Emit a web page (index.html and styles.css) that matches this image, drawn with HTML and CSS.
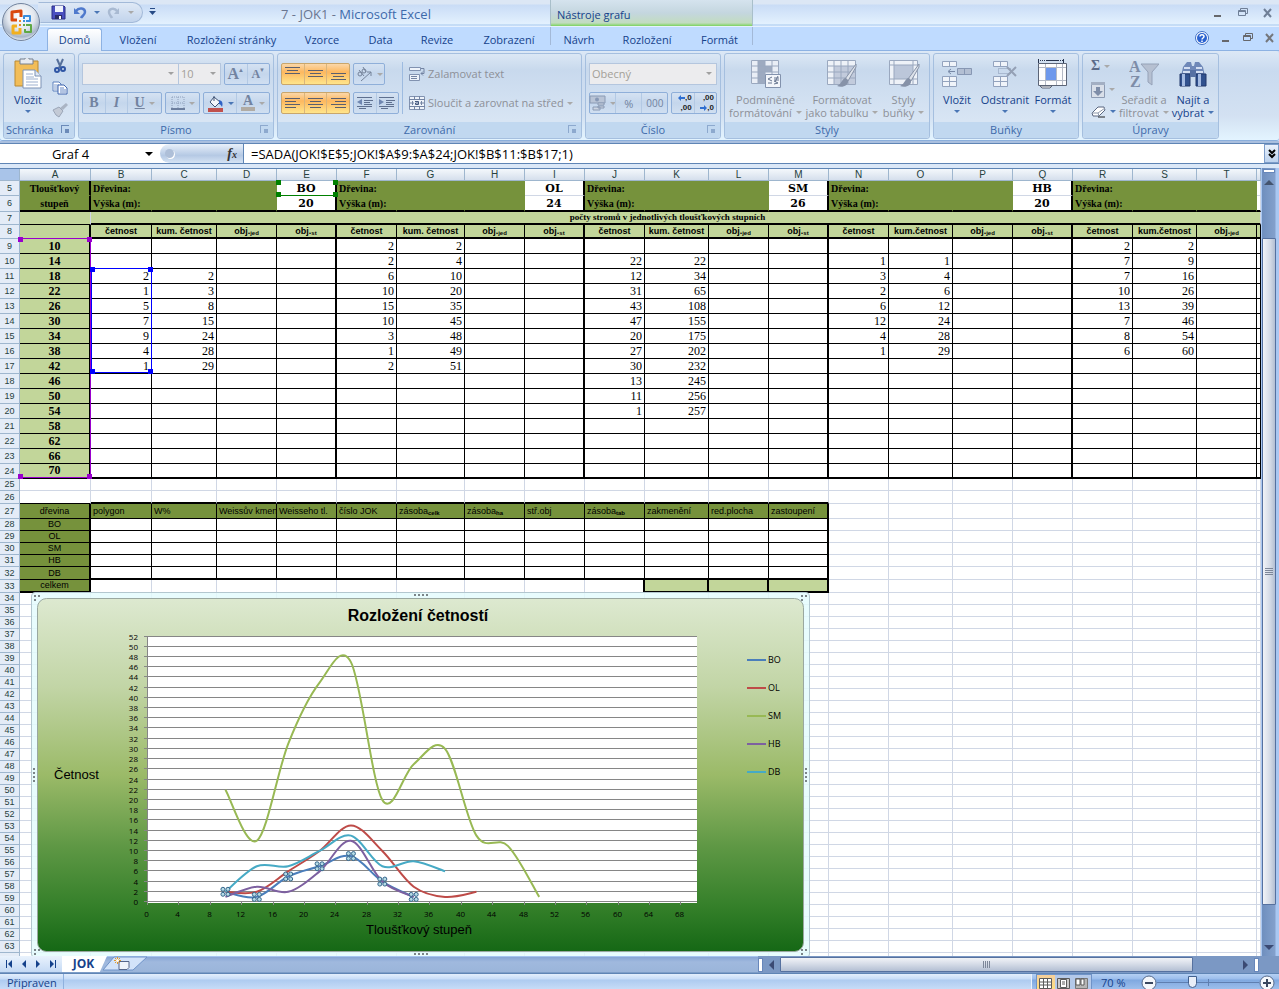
FILE: index.html
```html
<!DOCTYPE html>
<html lang="cs">
<head>
<meta charset="utf-8">
<title>7 - JOK1 - Microsoft Excel</title>
<link rel="stylesheet" href="styles.css">
</head>
<body>
<header class="titlebar">
  <button class="office" aria-label="Tlačítko Office">
    <svg width="42" height="42" viewBox="0 0 42 42">
      <defs>
        <radialGradient id="orb" cx=".5" cy=".35" r=".65"><stop offset="0" stop-color="#fff"/><stop offset=".55" stop-color="#e3e8ef"/><stop offset=".85" stop-color="#a9b6c8"/><stop offset="1" stop-color="#e9f0f8"/></radialGradient>
      </defs>
      <circle cx="21" cy="21" r="19.500" fill="#dfe8f3" opacity=".8"/>
      <circle cx="21" cy="21" r="18.500" fill="url(#orb)" stroke="#71839f"/>
      <g fill="none" stroke-linejoin="round">
        <path d="M17 19h-5v-8l9-1v6" stroke="#d9480f" stroke-width="3"/>
        <path d="M26 20h4v-5h-6v3" stroke="#3a8ede" stroke-width="2"/>
        <path d="M17 25h-4v7h7v-5" stroke="#f2b01e" stroke-width="3"/>
        <path d="M26 24h5v7h-6v-3" stroke="#5fa944" stroke-width="2"/>
      </g>
      <path d="M19 19h2v2h-2zM19 23h2v2h-2z" fill="#e8862a"/><path d="M23 19h2v2h-2z" fill="#3a8ede"/><path d="M23 23h2v2h-2z" fill="#5fa944"/>
    </svg>
  </button>
  <div class="qat">
    <button aria-label="Uložit"><svg width="15" height="15" viewBox="0 0 15 15"><path d="M1 1h12l1 1v12H1z" fill="#4a4fc0" stroke="#2b2f86"/><path d="M4 1h8v6H4z" fill="#eef2fb"/><path d="M4 10h7v4H4z" fill="#2a2c66"/><path d="M8 11h2v3H8z" fill="#fff"/></svg></button>
    <button aria-label="Zpět"><svg width="14" height="14" viewBox="0 0 14 14"><path d="M3 5c3-4 9-3 9 1 0 3-3 4-4 6" fill="none" stroke="#4f79cc" stroke-width="2.500"/><path d="M1 2v6h6z" fill="#4f79cc"/></svg></button>
    <i class="arr blue"></i>
    <button aria-label="Znovu" disabled><svg width="14" height="14" viewBox="0 0 14 14"><path d="M10 5c-3-4-8-2-8 1 0 3 2 4 3 6" fill="none" stroke="#a9bad2" stroke-width="2.500"/><path d="M12 2v6H7z" fill="#a9bad2"/></svg></button>
    <i class="arr"></i>
  </div>
  <button class="qat-more" aria-label="Přizpůsobit panel nástrojů Rychlý přístup"><svg width="7" height="8" viewBox="0 0 7 8"><path d="M1 0h5v1H1zM0 3h7L3.500 7z" fill="#274b86"/></svg></button>
  <h1><span>7 - JOK1 -</span> Microsoft Excel</h1>
  <div class="context">Nástroje grafu</div>
  <div class="winbtns">
    <button aria-label="Minimalizovat"><svg width="10" height="10" viewBox="0 0 10 10"><path d="M1 7h7v2H1z" fill="#66676b"/></svg></button>
    <button aria-label="Obnovit"><svg width="10" height="10" viewBox="0 0 10 10"><path d="M2.500 2.500v-2h7v5h-2M.5 2.500h7v5h-7zM0 3.500h8" fill="none" stroke="#6f7f97"/></svg></button>
    <button aria-label="Zavřít"><svg width="10" height="10" viewBox="0 0 10 10"><path d="M1 1l7 8M8 1L1 9" stroke="#6f7f97" stroke-width="2"/></svg></button>
  </div>
</header>

<nav class="tabs">
  <div class="tablist">
    <button class="tab on">Domů</button><button class="tab">Vložení</button><button class="tab">Rozložení stránky</button><button class="tab">Vzorce</button><button class="tab">Data</button><button class="tab">Revize</button><button class="tab">Zobrazení</button>
    <div class="ctx-tabs"><button class="tab">Návrh</button><button class="tab">Rozložení</button><button class="tab">Formát</button></div>
  </div>
  <div class="winbtns doc">
    <button aria-label="Nápověda"><svg width="14" height="14" viewBox="0 0 14 14"><circle cx="7" cy="7" r="6.500" fill="#fff" stroke="#3f6fc4"/><circle cx="7" cy="7" r="5" fill="#2a62d0"/><path d="M5 5.500C5 3 9 3 9 5.500 9 7 7 7 7 8.500M7 9.500v1.500" fill="none" stroke="#fff" stroke-width="1.500"/></svg></button>
    <button aria-label="Minimalizovat okno"><svg width="10" height="10" viewBox="0 0 10 10"><path d="M1 7h7v2H1z" fill="#66676b"/></svg></button>
    <button aria-label="Obnovit okno"><svg width="10" height="10" viewBox="0 0 10 10"><path d="M2.500 2.500v-2h7v5h-2M.5 2.500h7v5h-7zM0 3.500h8" fill="none" stroke="#66676b"/></svg></button>
    <button aria-label="Zavřít okno"><svg width="10" height="10" viewBox="0 0 10 10"><path d="M1 1l7 8M8 1L1 9" stroke="#75777c" stroke-width="2"/></svg></button>
  </div>
</nav>

<section class="ribbon">
  <section class="group">
    <div class="body clip">
      <button class="big"><svg width="30" height="32" viewBox="0 0 30 32"><path d="M2 3h23v25H2z" fill="#f2bd58" stroke="#b98a35"/><path d="M7 1h5c0-2 4-2 4 0h4v5H7z" fill="#e7eaf0" stroke="#77808f"/><path d="M10 12h12l6 6v12H10z" fill="#fff" stroke="#7d92b5"/><path d="M22 12v6h6" fill="#dfe7f3" stroke="#7d92b5"/><path d="M13 16h7M13 19h8M13 21h12M13 24h12M13 27h12" stroke="#9db0cf"/></svg><span>Vložit</span><i class="arr blue"></i></button>
      <div class="stack">
        <button aria-label="Vyjmout"><svg width="16" height="16" viewBox="0 0 16 16"><path d="M5 1l4 9M11 1L7 10" stroke="#56709b" stroke-width="2"/><circle cx="5" cy="12" r="2" fill="none" stroke="#2f55a4" stroke-width="2"/><circle cx="11" cy="11" r="2" fill="none" stroke="#2f55a4" stroke-width="2"/></svg></button>
        <button aria-label="Kopírovat"><svg width="16" height="16" viewBox="0 0 16 16"><path d="M1 2h6l2 2v7H1z" fill="#fff" stroke="#5d80bd"/><path d="M2 5h5M2 7h5M2 9h5" stroke="#7f9ccd"/><path d="M6 5h6l3 3v6H6z" fill="#fff" stroke="#3c63ad"/><path d="M8 8h4M8 10h6M8 12h6" stroke="#6487c5"/></svg></button>
        <button aria-label="Kopírovat formát"><svg width="16" height="16" viewBox="0 0 16 16"><path d="M14 1l2 2-5 5-3-2z" fill="#aab4c4"/><path d="M1 8l6-3 4 4-4 6-3-2z" fill="#c3cad6" stroke="#9aa5b7"/></svg></button>
      </div>
    </div>
    <h2>Schránka<i class="dlg"></i></h2>
  </section>

  <section class="group">
    <div class="body rows">
      <div class="row">
        <span class="joined"><span class="combo font"><select aria-label="Písmo" disabled><option></option></select></span><span class="combo size"><select aria-label="Velikost písma" disabled><option>10</option></select></span></span>
        <span class="set two"><button disabled class="serif a1">A<sup>▲</sup></button><button disabled class="serif a2">A<sup>▼</sup></button></span>
      </div>
      <div class="row">
        <span class="set biu"><button disabled class="serif">B</button><button disabled class="serif it">I</button><button disabled class="serif un">U<i class="arr"></i></button></span>
        <span class="set brd"><button disabled aria-label="Ohraničení"><svg width="14" height="14" viewBox="0 0 14 14"><path d="M1 1h12v12M1 1v12M7 1v12M1 7h12" fill="none" stroke="#8fa0bb" stroke-dasharray="1 1"/><path d="M0 13h14" stroke="#6c7f9f" stroke-width="2"/></svg><i class="arr"></i></button></span>
        <span class="set fill"><button aria-label="Barva výplně"><svg width="17" height="17" viewBox="0 0 17 17"><path d="M7 2l6 5-5 5-5-5z" fill="#f3f6fb" stroke="#3f5275"/><path d="M7 6V1" stroke="#3f5275"/><path d="M12 5c4 1 4 4 3 7-1-2-2-3-3-3z" fill="#2f62c5"/><path d="M1 13h15v4H1z" fill="#c0504d"/></svg><i class="arr blue"></i></button><button disabled aria-label="Barva písma" class="serif fc"><b>A</b><i class="arr"></i></button></span>
      </div>
    </div>
    <h2>Písmo<i class="dlg off"></i></h2>
  </section>

  <section class="group">
    <div class="body align">
      <div class="rows">
        <div class="row"><span class="set orange"><button aria-label="Zarovnat nahoru"><i class="ln t"></i></button><button aria-label="Zarovnat na střed svisle"><i class="ln m"></i></button><button aria-label="Zarovnat dolů"><i class="ln b"></i></button></span>
          <span class="set ori"><button disabled aria-label="Orientace"><svg width="17" height="16" viewBox="0 0 17 16"><g fill="none" stroke="#75839a"><ellipse cx="4" cy="8" rx="2" ry="2"/><path d="M3 4l5 6"/><ellipse cx="8" cy="5" rx="2" ry="2"/><path d="M7 1l3 5M5 15L15 6M11 6h4v4"/></g></svg><i class="arr"></i></button></span></div>
        <div class="row"><span class="set orange"><button aria-label="Zarovnat vlevo"><i class="ln l"></i></button><button aria-label="Zarovnat na střed"><i class="ln c"></i></button><button aria-label="Zarovnat vpravo"><i class="ln r"></i></button></span>
          <span class="set two"><button disabled aria-label="Zmenšit odsazení"><svg width="16" height="14" viewBox="0 0 16 14"><path d="M0 1.500h15M7 4.500h9M7 6.500h6M7 8.500h8M0 10.500h15M2 12.500h7" stroke="#5f708f"/><path d="M5 3v6L0 6z" fill="#6f86b0"/></svg></button><button disabled aria-label="Zvětšit odsazení"><svg width="16" height="14" viewBox="0 0 16 14"><path d="M0 1.500h15M7 4.500h9M7 6.500h6M7 8.500h8M0 10.500h15M2 12.500h7" stroke="#5f708f"/><path d="M0 3v6l5-3z" fill="#6f86b0"/></svg></button></span></div>
      </div>
      <div class="rows wide">
        <button disabled class="line"><svg width="16" height="16" viewBox="0 0 16 16"><path d="M.5 1.500h11v3H.5zM.5 8.500h10v6H.5z" fill="#eef3fa" stroke="#8192b0"/><path d="M2 10.500h6M2 12.500h6M12 2.500h3v5h-3M14 5.500l-2 2 2 2" fill="none" stroke="#7384a3"/></svg>Zalamovat text</button>
        <button disabled class="line"><svg width="16" height="16" viewBox="0 0 16 16"><path d="M.5 1.500h15v13H.5z" fill="#eef3fa" stroke="#8192b0"/><path d="M0 4.500h16M0 11.500h16M5.500 1v3M10.500 1v3M5.500 12v3M10.500 12v3M1 8h4M11 8h4M3.500 6v4M12.500 6v4" stroke="#7384a3"/><path d="M6 6.500h3.500v3h-3V8h3" fill="none" stroke="#44587f"/></svg>Sloučit a zarovnat na střed<i class="arr"></i></button>
      </div>
    </div>
    <h2>Zarovnání<i class="dlg off"></i></h2>
  </section>

  <section class="group">
    <div class="body rows">
      <div class="row"><span class="combo full"><select aria-label="Formát čísla" disabled><option>Obecný</option></select></span></div>
      <div class="row"><span class="set num"><button disabled aria-label="Účetnický formát"><svg width="17" height="16" viewBox="0 0 17 16"><path d="M1 1h15v7H1z" fill="#b9c4d6" stroke="#8a9ab4"/><circle cx="8" cy="4.500" r="2" fill="#8798b5"/><path d="M9 8h6v2H9zM9 11h6v2H9zM4 12h7v3H4z" fill="#cdd5e2" stroke="#8a9ab4"/></svg><i class="arr"></i></button><button disabled>%</button><button disabled class="k">000</button></span>
        <span class="set two dec"><button aria-label="Přidat desetinné místo"><span><svg width="7" height="6" viewBox="0 0 7 6"><path d="M0 3l3-3v2h4v2H3v2z" fill="#2f6fd0"/></svg>,0</span><span>,00</span></button><button aria-label="Odebrat desetinné místo"><span>,00</span><span><svg width="7" height="6" viewBox="0 0 7 6"><path d="M7 3L4 0v2H0v2h4v2z" fill="#2f6fd0"/></svg>,0</span></button></span></div>
    </div>
    <h2>Číslo<i class="dlg off"></i></h2>
  </section>

  <section class="group">
    <div class="body bigs styles">
      <button class="big" disabled><svg width="30" height="30" viewBox="0 0 30 30"><path d="M0 1h28v24H0z" fill="#e9eef6"/><path d="M7 1h7v24H7zM14 7h7v6h-7z" fill="#9daac0"/><path d="M.5 1.500h27v23H.5zM0 7h28M0 13h28M0 19h28M7 1v24M14 1v24M21 1v24" fill="none" stroke="#9aa8bf"/><path d="M14.500 15.500h15v13h-15z" fill="#f2f5fa" stroke="#8292ad"/><path d="M21 18l-4 2 4 2M17 24h4M23 19h5M23 21h5M27 17l-3 6M23 25l4-1-4-2" fill="none" stroke="#66758f"/></svg><span>Podmíněné<br>formátování<i class="arr"></i></span></button>
      <button class="big" disabled><svg width="32" height="30" viewBox="0 0 32 30"><path d="M1.500 1.500h28v24h-28z" fill="#eef2f8"/><path d="M8 7h22v18H8z" fill="#c2cbdc"/><path d="M1.500 1.500h28v24h-28zM1 7h28M1 13h28M1 19h28M8 1v24M15 1v24M22 1v24" fill="none" stroke="#9aa8bf"/><path d="M30 5L19 20l3 2 8-14z" fill="#dde2ea" stroke="#8793a8"/><path d="M20 19c-4 0-4 6-9 8 5 2 12 0 11-6z" fill="#8692a8"/></svg><span>Formátovat<br>jako tabulku<i class="arr"></i></span></button>
      <button class="big" disabled><svg width="32" height="30" viewBox="0 0 32 30"><path d="M1.500 1.500h28v24h-28z" fill="#eef2f8"/><path d="M6 6h19v14H6z" fill="#bcc7da"/><path d="M1.500 1.500h28v24h-28zM1 6h28M1 20h28M6 1v24M25 1v24" fill="none" stroke="#9aa8bf"/><path d="M31 5L20 20l3 2 8-14z" fill="#dde2ea" stroke="#8793a8"/><path d="M21 19c-4 0-4 6-9 8 5 2 12 0 11-6z" fill="#8692a8"/></svg><span>Styly<br>buňky<i class="arr"></i></span></button>
    </div>
    <h2>Styly</h2>
  </section>

  <section class="group">
    <div class="body bigs cells">
      <button class="big"><svg width="32" height="30" viewBox="0 0 32 30"><path d="M1.500 2.500h14v5h-14zM1.500 17.500h14v10h-14zM8.500 2v6M8.500 17v11M1 22.500h15" fill="#f0f4fa" stroke="#93a3be"/><path d="M16.500 9.500h14v6h-14zM23.500 9v7" fill="#b3bfd3" stroke="#8797b3"/><path d="M14 12.500H8M10 10l-3 2.500 3 2.500" fill="none" stroke="#7788a6"/></svg><span>Vložit</span><i class="arr blue"></i></button>
      <button class="big"><svg width="32" height="30" viewBox="0 0 32 30"><path d="M4.500 2.500h14v5h-14zM4.500 17.500h14v10h-14zM11.500 2v6M11.500 17v11M4 22.500h15" fill="#f0f4fa" stroke="#93a3be"/><path d="M9.500 9.500h12v5h-12z" fill="none" stroke="#8797b3" stroke-dasharray="1 1"/><path d="M18 8l9 9M27 8l-9 9" stroke="#94a0b5" stroke-width="2"/></svg><span>Odstranit</span><i class="arr blue"></i></button>
      <button class="big"><svg width="32" height="30" viewBox="0 0 32 30"><path d="M1.500 0v4M26.500 0v4M9 1.500h12" stroke="#27344e" fill="none"/><path d="M3 1.500h23" stroke="#27344e" stroke-dasharray="1 1"/><path d="M1.500 4.500h28v22h-28z" fill="#fdfdfe" stroke="#5c6577"/><path d="M9 9h10v12H9z" fill="#6d98ec"/><path d="M2 8.500h27M2 21.500h27M8.500 5v21M19.500 5v21M25.500 5v21" stroke="#b3b9c5"/><path d="M3 27h12l-2 2H5z" fill="#fff" stroke="#5c6577"/></svg><span>Formát</span><i class="arr blue"></i></button>
    </div>
    <h2>Buňky</h2>
  </section>

  <section class="group">
    <div class="body bigs edit">
      <div class="stack">
        <button disabled class="sigma">Σ<i class="arr"></i></button>
        <button disabled aria-label="Vyplnit"><svg width="14" height="16" viewBox="0 0 14 16"><path d="M.5.500h13v15H.5z" fill="#d9dfe9" stroke="#8d9bb3"/><path d="M0 0h14v3H0z" fill="#a3afc3"/><path d="M5 5h4v4h3l-5 5-5-5h3z" fill="#7e8da8"/></svg><i class="arr"></i></button>
        <button aria-label="Vymazat"><svg width="15" height="13" viewBox="0 0 15 13"><path d="M7 2h6l1 3-6 6H2l-1-3z" fill="#fff" stroke="#5a6780"/><path d="M1 8h6l7-5M8 11L7 8" fill="none" stroke="#8d98ab"/><path d="M7 12h7" stroke="#222"/></svg><i class="arr blue"></i></button>
      </div>
      <button class="big" disabled><svg width="30" height="30" viewBox="0 0 30 30"><path d="M12 5h18l-7 8v13l-4-3V13z" fill="#b6c0d1" stroke="#95a2b8"/><text x="0" y="13" class="az">A</text><text x="1" y="28" class="az">Z</text></svg><span>Seřadit a<br>filtrovat<i class="arr"></i></span></button>
      <button class="big"><svg width="30" height="30" viewBox="0 0 30 30"><path d="M5 8l4-5h4l1 4h2l1-4h4l4 5 2 9H3z" fill="#6f88b8"/><path d="M6 9h6M18 9h6M5 13h8M17 13h8" stroke="#d3def2" stroke-width="2"/><path d="M2 15h10v12H2zM18 15h10v12H18z" fill="#31518e" stroke="#22396a"/><path d="M4 15h3v12H4zM20 15h3v12h-3z" fill="#a5bbe2"/><path d="M12 11h6v7h-6z" fill="#5670a3"/></svg><span>Najít a<br>vybrat<i class="arr blue"></i></span></button>
    </div>
    <h2>Úpravy</h2>
  </section>
</section>

<section class="formula-row">
  <div class="namebox"><input aria-label="Pole názvů" value="Graf 4"><i class="arr black"></i></div>
  <div class="fxbox"><i class="knob"></i><button class="fx">f<small>x</small></button></div>
  <input class="formula" aria-label="Řádek vzorců" value="=SADA(JOK!$E$5;JOK!$A$9:$A$24;JOK!$B$11:$B$17;1)">
  <button class="expand" aria-label="Rozbalit řádek vzorců"><svg width="9" height="10" viewBox="0 0 9 10"><path d="M1 1l3 3 3-3M1 5l3 3 3-3" fill="none" stroke="#000" stroke-width="2"/></svg></button>
</section>

<main class="work">
  <div class="sheet">
    <table class="grid" id="grid"></table>
    <div class="range green"><i></i><i></i><i></i><i></i></div>
    <div class="range purple"><i></i><i></i><i></i><i></i></div>
    <div class="range blue"><i></i><i></i><i></i><i></i></div>
    <figure class="chart">
      <svg id="chart" width="767" height="354" viewBox="0 0 767 354" role="img" aria-label="Rozložení četností">
        <defs><linearGradient id="bg" x1="0" y1="0" x2="0" y2="1"><stop offset="0" stop-color="#dde9d0"/><stop offset=".25" stop-color="#c2d5a6"/><stop offset=".5" stop-color="#9bba68"/><stop offset=".7" stop-color="#5f9845"/><stop offset=".87" stop-color="#35802a"/><stop offset="1" stop-color="#156815"/></linearGradient></defs>
        <rect x=".5" y=".5" width="766" height="353" rx="9" fill="url(#bg)" stroke="#9aa8a0"/>
        <text x="381" y="23" class="c-title">Rozložení četností</text>
        <text x="17" y="181" class="c-axis">Četnost</text>
        <text x="329" y="336" class="c-axis">Tloušťkový stupeň</text>
      </svg>
      <i class="grip n"></i><i class="grip s"></i><i class="grip w"></i><i class="grip e"></i>
      <i class="grip nw"></i><i class="grip ne"></i><i class="grip sw"></i><i class="grip se"></i>
    </figure>
  </div>
  <div class="vscroll">
    <i class="split"></i>
    <button aria-label="Nahoru"><i class="tri up"></i></button>
    <div class="vtrack"><i class="vthumb"></i></div>
    <button aria-label="Dolů"><i class="tri down"></i></button>
  </div>
</main>

<section class="sheetbar">
  <div class="sheetnav">
    <button aria-label="První list"><svg width="8" height="8" viewBox="0 0 8 8"><path d="M1 0h1v8H1zM7 0v8L3 4z" fill="#15428b"/></svg></button>
    <button aria-label="Předchozí list"><svg width="8" height="8" viewBox="0 0 8 8"><path d="M6 0v8L2 4z" fill="#15428b"/></svg></button>
    <button aria-label="Další list"><svg width="8" height="8" viewBox="0 0 8 8"><path d="M2 0v8l4-4z" fill="#15428b"/></svg></button>
    <button aria-label="Poslední list"><svg width="8" height="8" viewBox="0 0 8 8"><path d="M6 0h1v8H6zM1 0v8l4-4z" fill="#15428b"/></svg></button>
  </div>
  <button class="sheettab">JOK</button>
  <button class="newtab" aria-label="Vložit list"><svg width="46" height="16" viewBox="0 0 46 16"><path d="M1 14L12 1h33L31 14z" fill="#d3e3f9" stroke="#6f93c8"/><path d="M17 5.500h10v6l-2 2h-8z" fill="#eef3fb" stroke="#54658a"/><path d="M15.500 1v7M12 4.500h7M13 2l5 5M18 2l-5 5" stroke="#e29a2c"/><circle cx="15.500" cy="4.500" r="1.500" fill="#fff"/></svg></button>
  <div class="hscroll">
    <i class="hsplit"></i>
    <button aria-label="Vlevo"><i class="tri left"></i></button>
    <div class="htrack"><div class="hthumb"><i></i></div></div>
    <button aria-label="Vpravo"><i class="tri right"></i></button>
    <i class="hsplit"></i>
  </div>
</section>

<footer class="status">
  <span class="ready">Připraven</span>
  <div class="tools">
    <div class="views">
      <button class="on" aria-label="Normálně"><svg width="13" height="11" viewBox="0 0 13 11"><path d="M.5.500h12v10H.5zM.5 4h12M.5 7h12M4.500.500v10M8.500.500v10" fill="#fff" stroke="#5b5b5b"/></svg></button>
      <button aria-label="Rozložení stránky"><svg width="13" height="11" viewBox="0 0 13 11"><path d="M.5.500h12v10H.5z" fill="#c9c9c9" stroke="#5b5b5b"/><path d="M3.500 1.500h6v8h-6zM5 4h3M5 6h3" fill="#fff" stroke="#5b5b5b"/></svg></button>
      <button aria-label="Konce stránek"><svg width="13" height="11" viewBox="0 0 13 11"><path d="M.5.500h12v10H.5z" fill="#b5b5b5" stroke="#777"/><path d="M1 1h4v6H1zM6 1h3v6H6z" fill="#fff" stroke="#5b5b5b"/></svg></button>
    </div>
    <span class="pct">70 %</span>
    <button class="zoom" aria-label="Oddálit"><svg width="16" height="16" viewBox="0 0 16 16"><circle cx="8" cy="8" r="7" fill="#f4f7fb" stroke="#566a8c"/><path d="M4 8h8" stroke="#39465e" stroke-width="2"/></svg></button>
    <input type="range" min="10" max="174" value="65" aria-label="Lupa">
    <button class="zoom" aria-label="Přiblížit"><svg width="16" height="16" viewBox="0 0 16 16"><circle cx="8" cy="8" r="7" fill="#f4f7fb" stroke="#566a8c"/><path d="M4 8h8M8 4v8" stroke="#39465e" stroke-width="2"/></svg></button>
  </div>
</footer>
<script src="script.js"></script>
</body>
</html>
```
FILE: styles.css
```css
* { box-sizing: border-box; }
body {
  margin: 0; height: 100vh; overflow: hidden;
  display: flex; flex-direction: column;
  font-family: "Open Sans", "Noto Sans", sans-serif; font-size: 11px; color: #15428b;
  background: #bfdbff;
}
button, select, input { font: inherit; color: inherit; margin: 0; padding: 0; border: 0; background: none; }
h1, h2, figure { margin: 0; font-weight: normal; font-size: inherit; }
svg { display: block; flex: none; }

.arr { width: 0; height: 0; border: 3px solid transparent; border-top-color: #a9a9a9; border-bottom: 0; flex: none; display: inline-block; }
.arr.blue { border-top-color: #4a76b5; }
.arr.black { border-width: 4px 4px 0; border-top-color: #000; }

/* title bar */
.titlebar {
  height: 27px; flex: none; display: flex; position: relative;
  background: linear-gradient(#dce7f5 0, #dce7f5 4px, #c9dcf6 5px, #e3f1fe 24px, #a6c8ee 25px, #e5f1ff 26px);
}
.office { position: absolute; left: 0; top: 1px; z-index: 2; }
.qat {
  margin: 2px 0 3px 38px; width: 105px; height: 21px; padding: 0 8px 0 12px;
  display: flex; align-items: center; justify-content: space-between;
  border: 1px solid #a2b9d8; border-left-color: transparent; border-radius: 0 11px 11px 0;
  background: linear-gradient(#dfe9f6, #c2d4ec);
}
.qat-more { width: 19px; padding-left: 6px; height: 24px; }
.titlebar h1 { width: 388px; text-align: center; font-size: 13px; line-height: 29px; color: #3e6aaa; }
.titlebar h1 span { color: #6a7690; }
.context {
  width: 203px; height: 26px; padding-left: 6px; line-height: 30px;
  border: solid #a9bfca; border-width: 0 1px;
  background: linear-gradient(#d5e3ee 0, #c4d6df 50%, #c2dcc0 88%, #7cd35e 100%);
}
.winbtns { margin-left: auto; display: flex; gap: 15px; padding: 8px 6px 0 0; align-items: flex-start; height: 20px; }
.winbtns.doc { gap: 12px; padding: 5px 4px 0 0; align-items: center; height: 17px; }

/* ribbon tabs */
.tabs { height: 24px; flex: none; display: flex; background: #bfdbff; border-bottom: 1px solid #8db2e3; }
.tablist { margin-left: 47px; display: grid; grid-template-columns: 55px 72px 115px 66px 51px 62px 82px 203px; height: 24px; }
.tab { line-height: 26px; text-align: center; white-space: nowrap; height: 24px; }
.tab.on { margin-top: 1px; height: 23px; line-height: 22px; background: linear-gradient(#fff, #dce7f5); border: 1px solid #8db2e3; border-bottom: 0; border-radius: 3px 3px 0 0; }
.ctx-tabs { display: grid; grid-template-columns: 56px 80px 1fr; border: solid #a3b9d8; border-width: 0 1px; height: 18px; }

/* ribbon */
.ribbon {
  height: 90px; flex: none; padding: 2px 3px 3px; display: grid; gap: 3px;
  grid-template-columns: 72px 196px 305px 136px 206px 146px 137px;
  background: linear-gradient(#dce8f6, #c9daef 20px, #d3e1f2 65px, #e3f4ff);
  border-bottom: 1px solid #8aaedb; border-radius: 0 3px 3px 3px;
}
.group { border: 1px solid #a5bfdf; border-radius: 3px; display: flex; flex-direction: column; background: linear-gradient(#dbe7f5, #c8d9ed 16px, #d8e5f4 66px); min-width: 0; }
.group h2 { height: 16px; line-height: 15px; text-align: center; background: #c1d8f0; color: #3e6aaa; display: flex; justify-content: center; border-radius: 0 0 3px 3px; position: relative; }
.dlg { position: absolute; right: 5px; top: 3px; width: 8px; height: 8px; border: solid #6b8ab8; border-width: 1px 0 0 1px; }
.dlg::after { content: ""; position: absolute; right: 0; bottom: 0; width: 4px; height: 4px; background: #6b8ab8; }
.dlg.off { opacity: .6; }
.group:first-child h2 { justify-content: flex-start; padding-left: 2px; }
.body { flex: 1; min-height: 0; }
.big { display: flex; flex-direction: column; align-items: center; line-height: 13px; white-space: nowrap; }
.big svg { height: 32px; margin-bottom: 3px; }
.big:disabled, .line:disabled { color: #8d9098; }
.big > .arr { margin-top: 4px; }
.big span .arr { margin: 0 0 3px 4px; }
.clip { display: grid; grid-template-columns: 48px 1fr; padding-top: 4px; }
.stack { display: flex; flex-direction: column; justify-content: space-between; align-items: flex-start; height: 60px; }
.stack button { display: flex; align-items: center; gap: 4px; }
.rows { display: flex; flex-direction: column; gap: 7px; padding: 9px 3px 0; }
.row { display: flex; gap: 3px; height: 22px; }
.joined { display: flex; }
.combo { position: relative; display: block; height: 22px; border: 1px solid #b4c6de; background: #ececee; color: #a39f98; }
.combo select { appearance: none; width: 100%; height: 19px; padding-left: 2px; color: inherit; opacity: 1; }
.combo::after { content: ""; position: absolute; right: 4px; top: 8px; border: 3px solid transparent; border-top-color: #a0a0a0; border-bottom: 0; }
.font { width: 97px; } .size { width: 43px; margin-left: -1px; } .full { width: 128px; }
.set { display: flex; border: 1px solid #8fafd9; border-radius: 2px; height: 22px; background: linear-gradient(#d5e2f2, #c4d6ec 50%, #d0dff1); }
.set button { flex: 1; display: flex; align-items: center; justify-content: center; gap: 4px; border-left: 1px solid #b3c9e4; min-width: 0; }
.set button:first-child { border-left: 0; }
.set button:disabled { color: #7283a0; }
.two { width: 46px; } .biu { width: 80px; } .brd { width: 35px; } .fill { width: 67px; } .ori { width: 32px; } .num { width: 80px; }
.biu .un { flex: 1 0 12px; }
.serif { font-family: "Liberation Serif", serif; font-weight: bold; font-size: 14px; }
.serif sup { font-size: 6px; line-height: 6px; align-self: flex-start; margin: 3px 0 0 -5px; }
.a1 { font-size: 16px; } .it { font-style: italic; } .un { text-decoration: underline; } .a2 { font-size: 12px; }
.fc b { border-bottom: 4px solid #b0aba4; line-height: 12px; padding: 0 2px; }
.k { font-size: 10px; }
.set.dec button { flex-direction: column; align-items: flex-end; gap: 0; padding-right: 2px; font: bold 8px/10px "Liberation Sans", Arial, sans-serif; color: #222; }
.dec span { display: flex; align-items: center; height: 10px; }
.orange { width: 69px; border-color: #c9a66b; background: linear-gradient(#fbd7a8, #fdb85f 40%, #ffe58b); }
.orange button { border-color: #d9b57c; }
.ln { width: 15px; height: 10px; display: block; --c: #5b5f6e; background:
  linear-gradient(var(--c), var(--c)) 0 0/15px 1px no-repeat, linear-gradient(var(--c), var(--c)) 50% 3px/11px 1px no-repeat,
  linear-gradient(var(--c), var(--c)) 0 6px/15px 1px no-repeat, linear-gradient(var(--c), var(--c)) 50% 9px/11px 1px no-repeat; }
.ln.t { margin-bottom: 6px; height: 8px; } .ln.m { height: 8px; } .ln.b { margin-top: 6px; height: 8px; }
.ln.l { background-position: 0 0, 0 3px, 0 6px, 0 9px; } .ln.r { background-position: 0 0, 100% 3px, 0 6px, 100% 9px; }
.align { display: flex; }
.align .wide { margin: 8px 0 8px 0; padding: 1px 0 0 6px; border-left: 1px solid #9dbbe0; }
.align .rows { flex: none; }
.line { height: 22px; display: flex; align-items: center; gap: 3px; white-space: nowrap; line-height: 20px; }
.bigs { display: grid; padding-top: 4px; align-items: start; }
.styles { grid-template-columns: 77px 76px 47px; padding-left: 2px; }
.cells { grid-template-columns: 46px 50px 46px; }
.edit { grid-template-columns: 34px 48px 50px; padding-left: 3px; }
.edit .stack { padding-left: 5px; }
.sigma { font: bold 14px/16px "Liberation Serif", serif; color: #5b6b88; }
.az { font: bold 16px "Liberation Serif", serif; fill: #7e8da8; }

/* formula bar */
.formula-row { flex: none; height: 27px; padding: 3px 0 4px; display: flex; background: linear-gradient(#a9bfdf 0, #a9bfdf 2px, #5f85b5 2px, #5f85b5 3px, #fff 3px, #fff 22px, #5f85b5 22px, #5f85b5 23px, #dbe8f8 23px); font-size: 13px; color: #000; }
.namebox { width: 160px; display: flex; align-items: center; }
.namebox input { width: 141px; text-align: center; height: 19px; margin-right: 4px; }
.fxbox { width: 84px; height: 19px; display: flex; align-items: center; justify-content: space-between; padding: 0 6px 0 5px; border-right: 1px solid #5f85b5; border-radius: 10px 0 0 10px; background: linear-gradient(#e8f0fa, #b5c9e4 60%, #d5e3f4); }
.knob { width: 9px; height: 9px; border-radius: 50%; background: #aebfd8; box-shadow: 1px 1px 0 #fff; }
.fx { font: italic bold 14px "Liberation Serif", serif; color: #333; }
.fx small { font-size: 10px; }
.formula { flex: 1; min-width: 0; height: 19px; padding-left: 7px; }
.expand { width: 15px; height: 19px; padding-left: 3px; border: 1px solid #7d9cc9; background: linear-gradient(#eaf2fc, #bcd2ee); }

/* worksheet */
.work { flex: 1; min-height: 0; display: flex; }
.sheet { flex: 1; min-width: 0; position: relative; overflow: hidden; border-top: 1px solid #5f85b5; background: #fff; }
.grid { table-layout: fixed; border-collapse: separate; border-spacing: 0; width: 100%; font-family: "Liberation Sans", Arial, sans-serif; font-size: 9px; color: #000; }
.grid td, .grid th { padding: 0 2px; border: 0 solid #d0d7e5; border-width: 0 1px 1px 0; line-height: 11px; white-space: nowrap; overflow: hidden; font-weight: normal; text-align: left; height: inherit; }
.grid th { background: #e4ecf7; border-color: #9eb6ce; text-align: center; color: #27413e; padding: 0; }
.grid thead th { background: linear-gradient(#f4f8fc, #d5dfec); font-size: 10px; }
.grid thead th.corner { background: #a9c4e9; }
.grid .dark { background: #76923c; border-color: transparent; }
.grid .light { background: #c2d69a; }
.grid .ink { border-color: #000; }
.grid .inkb { border-bottom-color: #000; }
.grid .tr { border-right: 2px solid #000; }
.grid .tb { border-bottom: 2px solid #000; }
.grid .mid { text-align: center; }
.grid .lab { font: bold 10px/12px "Liberation Serif", serif; vertical-align: bottom; }
.grid .spc { font: bold 11px/13px "DejaVu Serif", serif; text-align: center; }
.grid .cls { font: bold 12px/13px "Liberation Serif", serif; text-align: center; }
.grid .val { font: 12px/13px "Liberation Serif", serif; text-align: right; }
.grid .hd { font-weight: bold; text-align: center; }
.grid .note { font: bold 9px/11px "Liberation Serif", serif; text-align: center; padding-right: 18px; }
.grid sub { font-size: 6px; line-height: 0; font-weight: bold; vertical-align: -1px; }

.range { position: absolute; border: 1px solid; pointer-events: none; }
.range i { position: absolute; width: 5px; height: 5px; background: currentColor; }
.range i:nth-child(1) { left: -2px; top: -2px; } .range i:nth-child(2) { right: -2px; top: -2px; }
.range i:nth-child(3) { left: -2px; bottom: -2px; } .range i:nth-child(4) { right: -2px; bottom: -2px; }
.purple { color: #9900cc; left: 20px; top: 69px; width: 71px; height: 240px; border-left: 0; }
.blue.range { color: #0000ff; left: 91px; top: 99px; width: 61px; height: 105px; }
.green { color: #008000; left: 277px; top: 12px; width: 60px; height: 15px; border-color: transparent transparent #008000; }

.chart { position: absolute; left: 31px; top: 423px; width: 779px; height: 366px; padding: 5px; border: 1px solid #b3c7cf; border-radius: 4px; background: rgba(228, 252, 253, .85); }
.c-title { font: bold 16px "Liberation Sans", Arial, sans-serif; text-anchor: middle; }
.c-axis { font: 13px "Liberation Sans", Arial, sans-serif; }
.c-num { font: 8px "Open Sans", sans-serif; }
.c-leg { font: 9px "Open Sans", sans-serif; }
.end { text-anchor: end; } .center { text-anchor: middle; }
.grip { position: absolute; width: 14px; height: 2px; background: repeating-linear-gradient(90deg, #7b8488 0 2px, transparent 2px 4px); }
.grip.n { left: 382px; top: 1px; } .grip.s { left: 382px; bottom: 2px; }
.grip.w, .grip.e { width: 2px; height: 14px; top: 175px; background: repeating-linear-gradient(#7b8488 0 2px, transparent 2px 4px); }
.grip.w { left: 1px; } .grip.e { right: 2px; }
.grip.nw, .grip.ne, .grip.sw, .grip.se { width: 6px; height: 6px; background: repeating-linear-gradient(90deg, #7b8488 0 2px, transparent 2px 4px) 0 0/6px 2px no-repeat, linear-gradient(#7b8488, #7b8488) 0 4px/2px 2px no-repeat; }
.nw { left: 2px; top: 2px; } .ne { right: 2px; top: 2px; } .sw { left: 2px; bottom: 2px; } .se { right: 2px; bottom: 2px; }

.vscroll { width: 18px; flex: none; display: flex; flex-direction: column; align-items: center; background: linear-gradient(90deg, #a9c7f2 0 1px, #6f8fbe 1px, #83a0cc 14px, #a9c7f2 15px); padding-right: 2px; }
.split { width: 12px; height: 4px; margin-top: 1px; border: 1px solid #6787bb; background: #fff; flex: none; }
.vscroll button { height: 18px; width: 15px; display: flex; align-items: center; justify-content: center; }
.vtrack { flex: 1; width: 14px; padding: 47px 0 33px; }
.vthumb { display: flex; height: 100%; border: 1px solid #56719f; border-radius: 1px; align-items: center; justify-content: center; background: linear-gradient(90deg, #f1f3f7, #d3dae6 60%, #b3bfd3); }
.vthumb::after { content: ""; width: 8px; height: 8px; background: repeating-linear-gradient(#7d8799 0 1px, transparent 1px 2px); }
.tri { width: 0; height: 0; border: 5px solid transparent; }
.tri.up { border-bottom-color: #44546f; border-top: 0; } .tri.down { border-top-color: #3b4a74; border-bottom: 0; }
.tri.left { border-right-color: #3b4a74; border-left: 0; } .tri.right { border-left-color: #3b4a74; border-right: 0; }

/* sheet tabs */
.sheetbar { height: 18px; flex: none; display: flex; background: linear-gradient(#a6c4f0 0 1px, #87a5d4 1px, #a0b9de 6px, #9bb5da 16px, #5f85b5 17px); }
.sheetnav { width: 62px; height: 16px; display: flex; align-items: center; justify-content: space-around; background: linear-gradient(#e9f2fd, #c5daf5); padding: 0 2px; }
.sheettab { width: 45px; height: 16px; padding-right: 2px; background: #fff; font-weight: bold; font-size: 12px; line-height: 16px; clip-path: polygon(0 0, 100% 0, 84% 100%, 0 100%); }
.newtab { margin-left: -5px; height: 16px; }
.hscroll { margin-left: auto; width: 521px; padding-right: 20px; display: flex; height: 17px; align-items: center; background: #7b98c4; }
.hsplit { width: 5px; height: 14px; border: 1px solid #6787bb; background: #fff; flex: none; }
.hscroll button { width: 17px; height: 16px; display: flex; align-items: center; justify-content: center; flex: none; }
.htrack { flex: 1; padding: 0 44px 0 0; height: 15px; }
.hthumb { height: 15px; border: 1px solid #56719f; border-radius: 1px; display: flex; align-items: center; justify-content: center; background: linear-gradient(#f1f3f7, #d3dae6 50%, #b3bfd3); }
.hthumb i { width: 8px; height: 7px; background: repeating-linear-gradient(90deg, #7d8799 0 1px, transparent 1px 2px); }

/* status bar */
.status { height: 15px; flex: none; display: flex; align-items: flex-start; overflow: hidden; background: linear-gradient(#e3eefc 0, #c8ddf8 5px, #aecbf0 6px, #c7dcf7); }
.ready { width: 64px; padding-left: 7px; line-height: 17px; border-right: 1px solid #8fb1de; height: 15px; }
.tools { margin-left: auto; display: flex; flex: none; padding: 0 4px 0 4px; border-left: 1px solid #e8f2fd; background: linear-gradient(#b5d0f3 0, #9bbdec 5px, #7fa8e0 6px, #a4c4ee); }
.views { display: flex; border: 1px solid #6f93c8; height: 16px; }
.views button { width: 18px; height: 16px; padding: 1px 0 0 2px; background: #b4c9e9; }
.views .on { background: linear-gradient(#f5cf9c, #ffe07b); }
.pct { width: 49px; padding-left: 9px; line-height: 17px; }
.zoom, .tools input { flex: none; }
.tools input { appearance: none; width: 102px; height: 16px; background: linear-gradient(#5f7fb0, #5f7fb0) 0 8px/100% 1px no-repeat, linear-gradient(#5f7fb0, #5f7fb0) 50% 5px/1px 7px no-repeat; }
.tools input::-webkit-slider-thumb { appearance: none; width: 9px; height: 12px; background: #e8eef8; border: 1px solid #41608f; border-radius: 0 0 5px 5px; }
```
FILE: script.js
```js
const LETTERS = "ABCDEFGHIJKLMNOPQRSTU".split("");
const WIDTHS = [71, 61, 65, 60, 60, 60, 68, 60, 60, 60, 64, 60, 60, 60, 64, 60, 60, 60, 64, 60];
const CLASSES = [10, 14, 18, 22, 26, 30, 34, 38, 42, 46, 50, 54, 58, 62, 66, 70];
const SPECIES = { 4: ["BO", 20], 8: ["OL", 24], 12: ["SM", 26], 16: ["HB", 20] };

// column index -> [first row, counts]
const COUNTS = {
  1: [11, [2, 1, 5, 7, 9, 4, 1]],
  2: [11, [2, 3, 8, 15, 24, 28, 29]],
  5: [9, [2, 2, 6, 10, 15, 10, 3, 1, 2]],
  6: [9, [2, 4, 10, 20, 35, 45, 48, 49, 51]],
  9: [10, [22, 12, 31, 43, 47, 20, 27, 30, 13, 11, 1]],
  10: [10, [22, 34, 65, 108, 155, 175, 202, 232, 245, 256, 257]],
  13: [10, [1, 3, 2, 6, 12, 4, 1]],
  14: [10, [1, 4, 6, 12, 24, 28, 29]],
  17: [9, [2, 7, 7, 10, 13, 7, 8, 6]],
  18: [9, [2, 9, 16, 26, 39, 46, 54, 60]]
};
const SUMMARY = ["dřevina", "polygon", "W%", "Weissův kmen", "Weisseho tl.", "číslo JOK", "zásoba<sub>celk</sub>",
  "zásoba<sub>ha</sub>", "stř.obj", "zásoba<sub>tab</sub>", "zakmenění", "red.plocha", "zastoupení"];
const SUMMARY_ROWS = { 28: "BO", 29: "OL", 30: "SM", 31: "HB", 32: "DB", 33: "celkem" };

function rowHeight(r) {
  if (r === 6) return 16;
  if (r === 7 || r === 26 || r === 32 || r === 33) return 13;
  if (r === 8 || r === 24) return 14;
  if (r < 24 || r === 27) return 15;
  return 12;
}

function cell(r, c) {
  const edge = c % 4 === 0 && c < 20 ? " tr" : "";
  if (r <= 6) {
    const tb = r === 6 ? " tb" : "";
    if (c === 0) return ["dark mid lab tr" + tb, r === 5 ? "Tloušťkový" : "stupeň"];
    if (c % 4 === 0) return ["spc" + edge + tb, SPECIES[c] ? SPECIES[c][r - 5] : ""];
    return ["dark lab" + tb, c % 4 === 1 ? (r === 5 ? "Dřevina:" : "Výška (m):") : ""];
  }
  if (r === 8) {
    const kum = c > 12 ? "kum.četnost" : "kum. četnost";
    const t = c === 0 ? "" : ["obj.<sub>st</sub>", "četnost", kum, "obj.<sub>jed</sub>"][c % 4];
    return ["light ink hd" + edge + (c ? " tb" : ""), c === 20 ? "" : t];
  }
  if (r <= 24) {
    const tb = r === 24 ? " tb" : "";
    if (c === 0) return ["light ink cls tr" + tb, CLASSES[r - 9]];
    const s = COUNTS[c];
    const v = s && r >= s[0] ? s[1][r - s[0]] : undefined;
    return ["ink val" + edge + tb, v === undefined ? "" : v];
  }
  if (r === 26) return [c === 0 ? "inkb" : c <= 12 ? "tb" : "", ""];
  if (r >= 27 && r <= 33 && c <= 12) {
    if (c === 0) return ["dark inkb mid tr" + (r === 33 ? " tb" : ""), r === 27 ? SUMMARY[0] : SUMMARY_ROWS[r]];
    if (r === 27) return ["dark ink" + (c === 12 ? " tr" : ""), SUMMARY[c]];
    if (r < 33) return ["ink" + (c === 12 ? " tr" : "") + (r === 32 ? " tb" : ""), ""];
    if (c === 9) return ["tr", ""];
    if (c > 9) return ["light tr tb", ""];
  }
  return ["", ""];
}

let html = '<colgroup><col style="width:20px">' + WIDTHS.map(w => `<col style="width:${w}px">`).join("") + "<col></colgroup>";
html += '<thead><tr style="height:12px"><th class="corner"></th>' + LETTERS.map(l => `<th>${l === "U" ? "" : l}</th>`).join("") + "</tr></thead><tbody>";
for (let r = 5; r <= 64; r++) {
  html += `<tr style="height:${rowHeight(r)}px"><th>${r < 64 ? r : ""}</th>`;
  if (r === 7) {
    html += '<td class="light inkb"></td><td class="light note tb" colspan="20">počty stromů v jednotlivých tloušťkových stupních</td>';
  } else {
    for (let c = 0; c < 21; c++) {
      const [cls, text] = cell(r, c);
      html += `<td class="${cls}">${text}</td>`;
    }
  }
  html += "</tr>";
}
document.getElementById("grid").innerHTML = html + "</tbody>";

// chart
const X0 = 110, Y0 = 304, UX = 7.844, UY = 5.104;
const px = x => X0 + x * UX;
const py = y => Y0 - y * UY;
const SERIES = [
  ["BO", "#4a7ebb", COUNTS[1][1]],
  ["OL", "#be4b48", COUNTS[5][1]],
  ["SM", "#98b954", COUNTS[9][1]],
  ["HB", "#7d60a0", COUNTS[13][1]],
  ["DB", "#46aac5", COUNTS[17][1]]
];
let g = `<rect x="${X0}" y="38" width="550" height="267" fill="#fff"/>`;
for (let v = 0; v <= 52; v += 2) {
  const y = Math.round(py(v)) - 0.5;
  g += `<path d="M${X0 - 3} ${y}H660" stroke="#868686"/><text class="c-num end" x="101" y="${y + 3}">${v}</text>`;
}
g += `<path d="M${X0 + 0.5} 38V307" stroke="#868686"/>`;
for (let v = 0; v <= 68; v += 4) {
  const x = Math.round(px(v)) + 0.5;
  g += `<path d="M${x} 304v3" stroke="#868686"/><text class="c-num center" x="${x - 1}" y="319">${v}</text>`;
}
function smooth(values) {
  const p = values.map((v, i) => [px(10 + 4 * i), py(v)]);
  let d = `M${p[0]}`;
  for (let i = 0; i < p.length - 1; i++) {
    const a = p[i - 1] || p[i], b = p[i], c = p[i + 1], e = p[i + 2] || c;
    d += `C${b[0] + (c[0] - a[0]) / 6} ${b[1] + (c[1] - a[1]) / 6} ${c[0] - (e[0] - b[0]) / 6} ${c[1] - (e[1] - b[1]) / 6} ${c}`;
  }
  return d;
}
SERIES.forEach(([name, color, values], i) => {
  const y = 62 + 28 * i;
  g += `<path d="${smooth(values)}" fill="none" stroke="${color}" stroke-width="2"/>`;
  g += `<path d="M710 ${y}h19" stroke="${color}" stroke-width="2"/><text class="c-leg" x="731" y="${y + 3}">${name}</text>`;
});
SERIES[0][2].forEach((v, i) => {
  for (const [dx, dy] of [[-2.5, -2.5], [2.5, -2.5], [-2.5, 2.5], [2.5, 2.5]]) {
    g += `<circle cx="${px(10 + 4 * i) + dx}" cy="${py(v) + dy}" r="2" fill="#b5dbe6" stroke="#34658c"/>`;
  }
});
document.getElementById("chart").insertAdjacentHTML("beforeend", g);
```
